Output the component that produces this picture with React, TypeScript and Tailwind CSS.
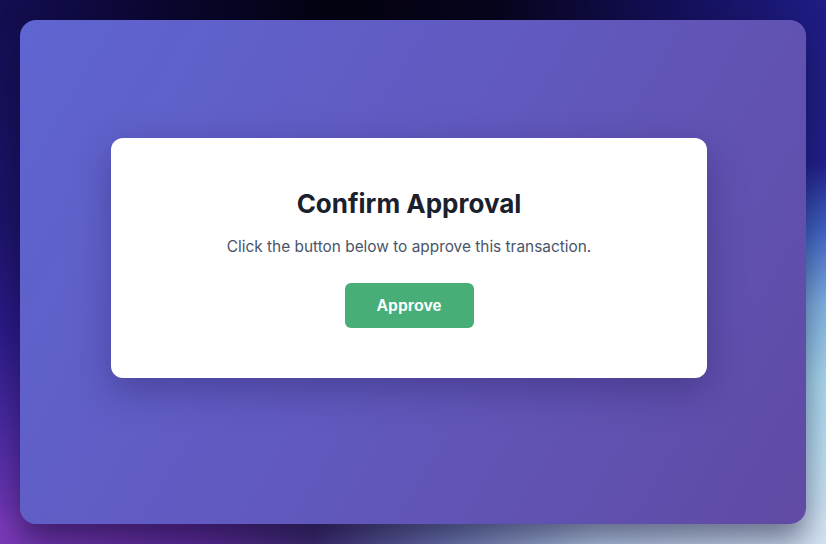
export default function App() {
  return (
    <div className="relative h-[544px] w-[826px] overflow-hidden bg-[linear-gradient(180deg,#140e52_0%,#1c1468_40%,#2a1a86_60%,#4a2aa0_78%,#7a3ab8_100%)] font-['Inter',sans-serif]">
      {/* wallpaper layers */}
      <div className="absolute right-0 top-0 h-full w-[360px] bg-[linear-gradient(180deg,#1f1d85_0%,#22208a_30%,#3f62c4_42%,#7fb2e2_56%,#a8d8ee_70%,#d2e4f4_100%)] [mask-image:linear-gradient(to_left,black_15%,transparent_100%)]" />
      <div className="absolute left-0 top-0 h-[40px] w-full bg-[linear-gradient(90deg,#140e52_0%,#0a0730_20%,#040310_40%,#07051c_60%,#130f55_80%,#1f1d85_100%)] [mask-image:linear-gradient(to_bottom,black_50%,transparent_100%)]" />
      <div className="absolute bottom-0 left-0 h-[40px] w-full bg-[linear-gradient(90deg,#7a3ab8_0%,#5c2a98_25%,#3e2c70_38%,#6f7cb4_55%,#b4c8e6_72%,#d4e4f4_100%)] [mask-image:linear-gradient(to_top,black_50%,transparent_100%)]" />
      <div className="relative flex h-full w-full p-5">
        <div className="flex flex-1 items-center justify-center rounded-2xl bg-[linear-gradient(120deg,#5f65d1_0%,#6159be_50%,#604aa4_100%)] shadow-[0_16px_30px_rgba(10,5,40,0.5)]">
          <div className="mb-[28px] mr-[8px] flex w-[596px] flex-col items-center rounded-xl bg-white px-10 pt-[50px] pb-[50px] shadow-[0_12px_36px_rgba(30,20,80,0.35)]">
            <h1 className="text-[26px] font-bold leading-[32px] text-[#1a202c]">Confirm Approval</h1>
            <p className="mt-[16px] text-[15.4px] leading-[22px] text-[#4a5568]">
              Click the button below to approve this transaction.
            </p>
            <button className="mt-[25px] h-[45px] w-[129px] rounded-md bg-[#48ae78] font-['Liberation_Sans',Arial,sans-serif] text-[16px] font-bold text-white">
              Approve
            </button>
          </div>
        </div>
      </div>
    </div>
  );
}
